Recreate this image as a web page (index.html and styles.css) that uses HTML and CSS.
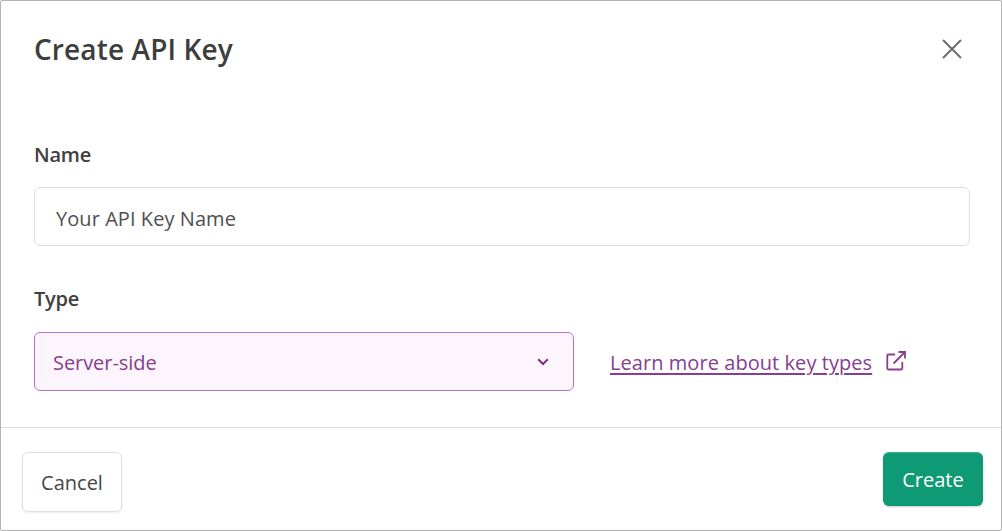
FILE: index.html
```html
<!DOCTYPE html>
<html lang="en">
<head>
<meta charset="utf-8">
<title>Create API Key</title>
<link rel="stylesheet" href="styles.css">
</head>
<body>
<div class="dialog">
  <header class="head">
    <h1 class="title">Create API Key</h1>
    <svg class="close" width="22" height="22" viewBox="0 0 22 22" aria-hidden="true"><path d="M2 2 20 20M20 2 2 20"/></svg>
  </header>
  <main class="body">
    <div class="label first">Name</div>
    <div class="input">Your API Key Name</div>
    <div class="label second">Type</div>
    <div class="row">
      <div class="select">
        <span class="value">Server-side</span>
        <svg class="chev" width="12" height="8" viewBox="0 0 12 8" aria-hidden="true"><path d="M1.2 1.3 6 6 10.8 1.3"/></svg>
      </div>
      <a class="link" href="#">Learn more about key types</a>
      <svg class="ext" width="20" height="20" viewBox="0 0 20 20" aria-hidden="true"><path d="M9 3.500H2.500a1.200 1.200 0 0 0-1.200 1.200v12.600a1.200 1.200 0 0 0 1.200 1.200h12.600a1.200 1.200 0 0 0 1.200-1.200V11M7.500 12.500 19 1M12.500 1H19V7.500"/></svg>
    </div>
  </main>
  <footer class="foot">
    <button class="btn cancel">Cancel</button>
    <button class="btn create">Create</button>
  </footer>
</div>
</body>
</html>
```
FILE: styles.css
```css
* { box-sizing: border-box; }
html, body { margin: 0; padding: 0; height: 100%; background: #fff; }
body { font-family: "Open Sans", "Noto Sans", sans-serif; color: #3f3f3f; }
.dialog { width: 1002px; height: 531px; border: 1px solid #b4b4b4; border-radius: 2px; display: flex; flex-direction: column; background: #fff; }
.head { display: flex; justify-content: space-between; align-items: center; height: 97px; padding: 0 38px 0 33px; flex: none; }
.title { margin: 0 0 1px; font-size: 28px; font-weight: 600; line-height: 36px; letter-spacing: 0.12px; color: #3d3d3d; }
.close { margin-bottom: 2px; }
.close path { fill: none; stroke: #6f6b6f; stroke-width: 2; }
.body { flex: 1; padding: 0 31px 0 33px; }
.label { font-size: 20px; font-weight: 600; line-height: 26px; letter-spacing: -0.2px; color: #404040; }
.label.first { margin-top: 44px; }
.label.second { margin-top: 40px; }
.input { margin-top: 19px; height: 59px; border: 1px solid #dedede; border-radius: 6px; padding-left: 21px; font-size: 20px; line-height: 61px; letter-spacing: 0.06px; color: #4f4f4f; }
.row { display: flex; align-items: center; margin-top: 20px; }
.select { width: 540px; height: 59px; background: #fcf5fe; border: 1px solid #bb6fd3; border-radius: 6px; display: flex; align-items: center; justify-content: space-between; padding: 0 24px 0 18px; font-size: 20px; color: #86408f; }
.value { padding-top: 2px; letter-spacing: -0.06px; }
.chev path { fill: none; stroke: #7b2f80; stroke-width: 2; }
.link { margin-left: 36px; padding-top: 2px; font-size: 20px; letter-spacing: 0.06px; color: #86408f; text-decoration: underline; text-decoration-thickness: 2px; text-underline-offset: 3px; }
.ext { margin-left: 14px; margin-bottom: 2px; }
.ext path { fill: none; stroke: #86408f; stroke-width: 1.8; }
.foot { flex: none; height: 103px; border-top: 1px solid #dcdcdc; display: flex; justify-content: space-between; padding: 24px 18px 0 21px; }
.btn { font-family: inherit; font-size: 20px; border-radius: 6px; cursor: pointer; }
.cancel { width: 100px; height: 60px; background: #fff; border: 1px solid #dfdfdf; color: #454545; box-shadow: 0 1px 2px rgba(0,0,0,.08); }
.create { width: 100px; height: 54px; background: #0f9a76; border: 1px solid #0f9a76; border-top-color: #3fae90; color: #fff; box-shadow: 0 1px 2px rgba(0,0,0,.2); }
```
